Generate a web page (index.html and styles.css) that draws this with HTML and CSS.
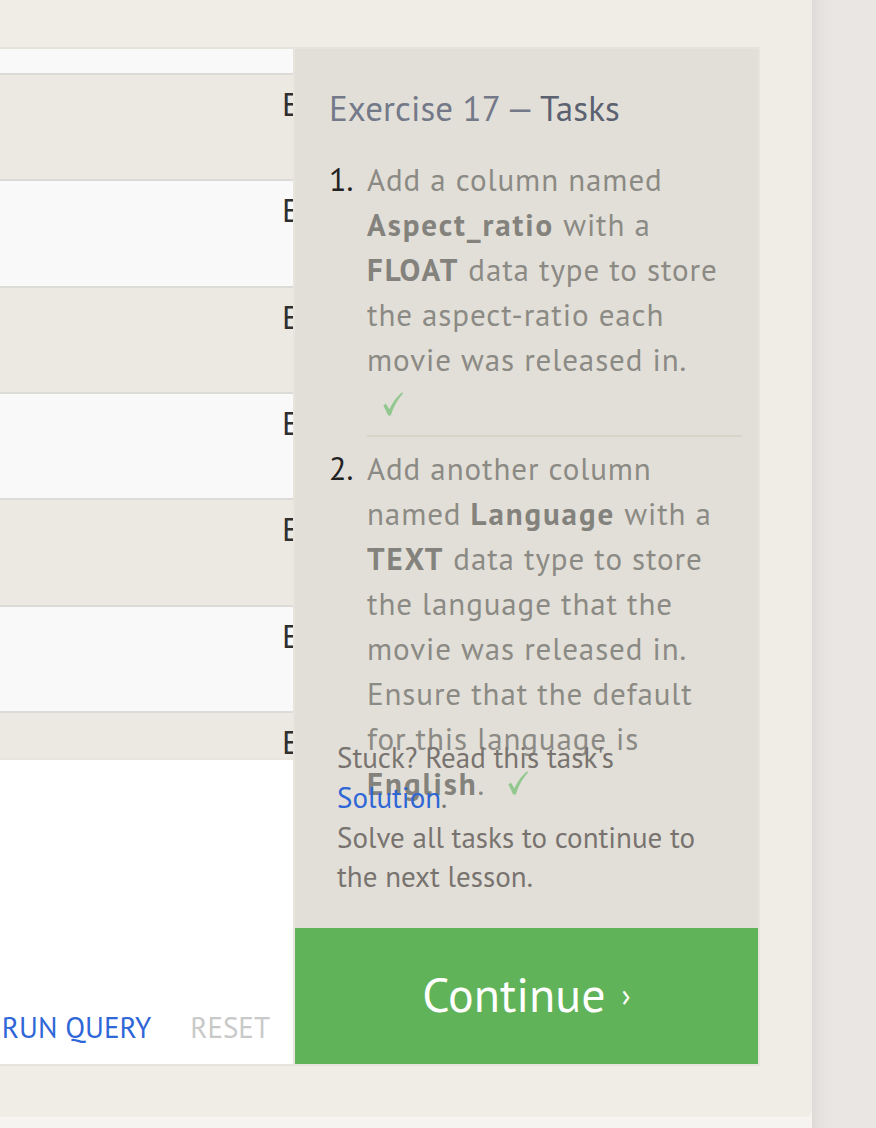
FILE: index.html
```html
<!DOCTYPE html>
<html lang="en">
<head>
<meta charset="utf-8">
<title>Exercise 17 — Tasks</title>
<link rel="stylesheet" href="styles.css">
</head>
<body>
<div class="shell">
  <main class="page">
    <section class="lesson">
      <div class="left">
        <div class="table">
          <div class="row light partial"></div>
          <div class="row beige"><span class="cell">English</span></div>
          <div class="row light"><span class="cell">English</span></div>
          <div class="row beige"><span class="cell">English</span></div>
          <div class="row light"><span class="cell">English</span></div>
          <div class="row beige"><span class="cell">English</span></div>
          <div class="row light"><span class="cell">English</span></div>
          <div class="row beige"><span class="cell">English</span></div>
        </div>
        <div class="editor">
          <div class="actions">
            <span class="btn run">Run Query</span>
            <span class="btn reset">Reset</span>
          </div>
        </div>
      </div>
      <aside class="panel">
        <div class="tasks">
          <h2 class="title">Exercise 17 — <span class="title-strong">Tasks</span></h2>
          <ol class="task-list">
            <li class="task">
              <span class="num">1.</span>
              <div class="body">Add a column named <b>Aspect_ratio</b> with a <b>FLOAT</b> data type to store the aspect-ratio each movie was released in. <span class="check"><svg viewBox="0 0 20 24" width="20" height="24" aria-hidden="true"><path d="M0.4 13.4 L2.8 11.6 L6.4 17.2 C9.4 10.8 13.6 4.8 19.0 0.2 L20.0 1.6 C14.8 7.0 10.8 14.2 7.8 23.4 L5.2 23.4 Z"/></svg></span></div>
            </li>
            <li class="task">
              <span class="num">2.</span>
              <div class="body">Add another column named <b>Language</b> with a <b>TEXT</b> data type to store the language that the movie was released in. Ensure that the default for this language is <b>English</b>. <span class="check"><svg viewBox="0 0 20 24" width="20" height="24" aria-hidden="true"><path d="M0.4 13.4 L2.8 11.6 L6.4 17.2 C9.4 10.8 13.6 4.8 19.0 0.2 L20.0 1.6 C14.8 7.0 10.8 14.2 7.8 23.4 L5.2 23.4 Z"/></svg></span></div>
            </li>
          </ol>
        </div>
        <div class="stuck">
          <p>Stuck? Read this task's <a class="link" href="#">Solution</a>.</p>
          <p>Solve all tasks to continue to the next lesson.</p>
        </div>
        <a class="continue" href="#">Continue <span class="chev">›</span></a>
      </aside>
    </section>
  </main>
  <div class="sidebar"></div>
</div>
</body>
</html>
```
FILE: styles.css
```css
html, body {
  margin: 0;
  padding: 0;
}
body {
  background: #f5f4f0;
  font-family: "PT Sans", "Lato", "Liberation Sans", sans-serif;
}
.shell {
  display: flex;
  width: 876px;
  height: 1128px;
  overflow: hidden;
}
.page {
  width: 812px;
  height: 1117px;
  flex: none;
  background: #f0ede6;
  border-bottom-right-radius: 7px;
  padding-top: 47px;
  box-sizing: border-box;
}
.sidebar {
  flex: 1;
  height: 1128px;
  background: linear-gradient(to right, #dedad8 0, #e5e2df 8px, #e9e6e3 22px, #e9e6e3 100%);
}
.lesson {
  display: flex;
  width: 760px;
  height: 1019px;
  border: 2px solid #e6e4dc;
  border-left: none;
  box-sizing: border-box;
}
.left {
  width: 293px;
  flex: none;
  display: flex;
  flex-direction: column;
  overflow: hidden;
}
.table {
  height: 711px;
  flex: none;
  overflow: hidden;
  border-bottom: 2px solid #e8e6df;
  box-sizing: border-box;
}
.row {
  height: 104.33px;
  border-bottom: 2px solid #dcdbd7;
  box-sizing: content-box;
  padding-left: 282px;
  white-space: nowrap;
}
.row.partial { height: 24px; }
.row.light { background: #f9f9f9; }
.row.beige { background: #ebe9e1; }
.cell {
  display: block;
  padding-top: 9px;
  font-size: 33px;
  line-height: 40px;
  color: #2f2f2f;
}
.editor {
  flex: 1;
  background: #ffffff;
  display: flex;
  flex-direction: column;
  justify-content: flex-end;
}
.actions {
  display: flex;
  justify-content: flex-end;
  gap: 39px;
  padding: 0 23px 17px 0;
}
.btn {
  font-size: 29px;
  line-height: 40px;
  text-transform: uppercase;
  white-space: nowrap;
}
.btn.run { color: #2f66d8; }
.btn.reset { color: #c9c9c9; }

.panel {
  flex: 1;
  display: flex;
  flex-direction: column;
  background: #e2dfd8;
  border-left: 2px solid #e6e4dc;
  min-width: 0;
}
.tasks {
  flex: 1 1 0;
  min-height: 0;
  padding: 39px 16px 0 34px;
}
.title {
  margin: 0;
  font-size: 35px;
  line-height: 40px;
  font-weight: normal;
  letter-spacing: 0.1px;
  color: #737988;
  white-space: nowrap;
}
.title-strong { color: #5b6171; }
.task-list {
  list-style: none;
  margin: 29px 0 0;
  padding: 0;
}
.task {
  display: flex;
}
.task + .task { margin-top: 9px; }
.num {
  width: 38px;
  flex: none;
  font-size: 32px;
  line-height: 45px;
  color: #222222;
}
.body {
  flex: 1;
  font-size: 31px;
  line-height: 45px;
  letter-spacing: 0.9px;
  color: #8b8a84;
  padding: 0 10px 8px 0;
  border-bottom: 2px solid #d7d4c9;
}
.task:last-child .body { border-bottom: none; }
.body b {
  font-weight: bold;
  letter-spacing: 1.9px;
  color: #83827c;
}
.check {
  display: inline-block;
  margin-left: 16px;
  padding-right: 14px;
  line-height: 0;
}
.check svg {
  display: inline-block;
  fill: #92c88f;
  vertical-align: baseline;
}
.stuck {
  flex: none;
  width: 380px;
  padding: 0 0 31px 42px;
  font-size: 29px;
  line-height: 39.7px;
  color: #78736f;
}
.stuck p { margin: 0; }
.link {
  color: #2f66d6;
  text-decoration: none;
}
.continue {
  flex: none;
  height: 136px;
  box-sizing: border-box;
  padding-bottom: 4px;
  background: #61b35a;
  color: #ffffff;
  text-decoration: none;
  font-size: 48px;
  display: flex;
  align-items: center;
  justify-content: center;
  gap: 16px;
}
.chev {
  font-size: 31px;
}
```
